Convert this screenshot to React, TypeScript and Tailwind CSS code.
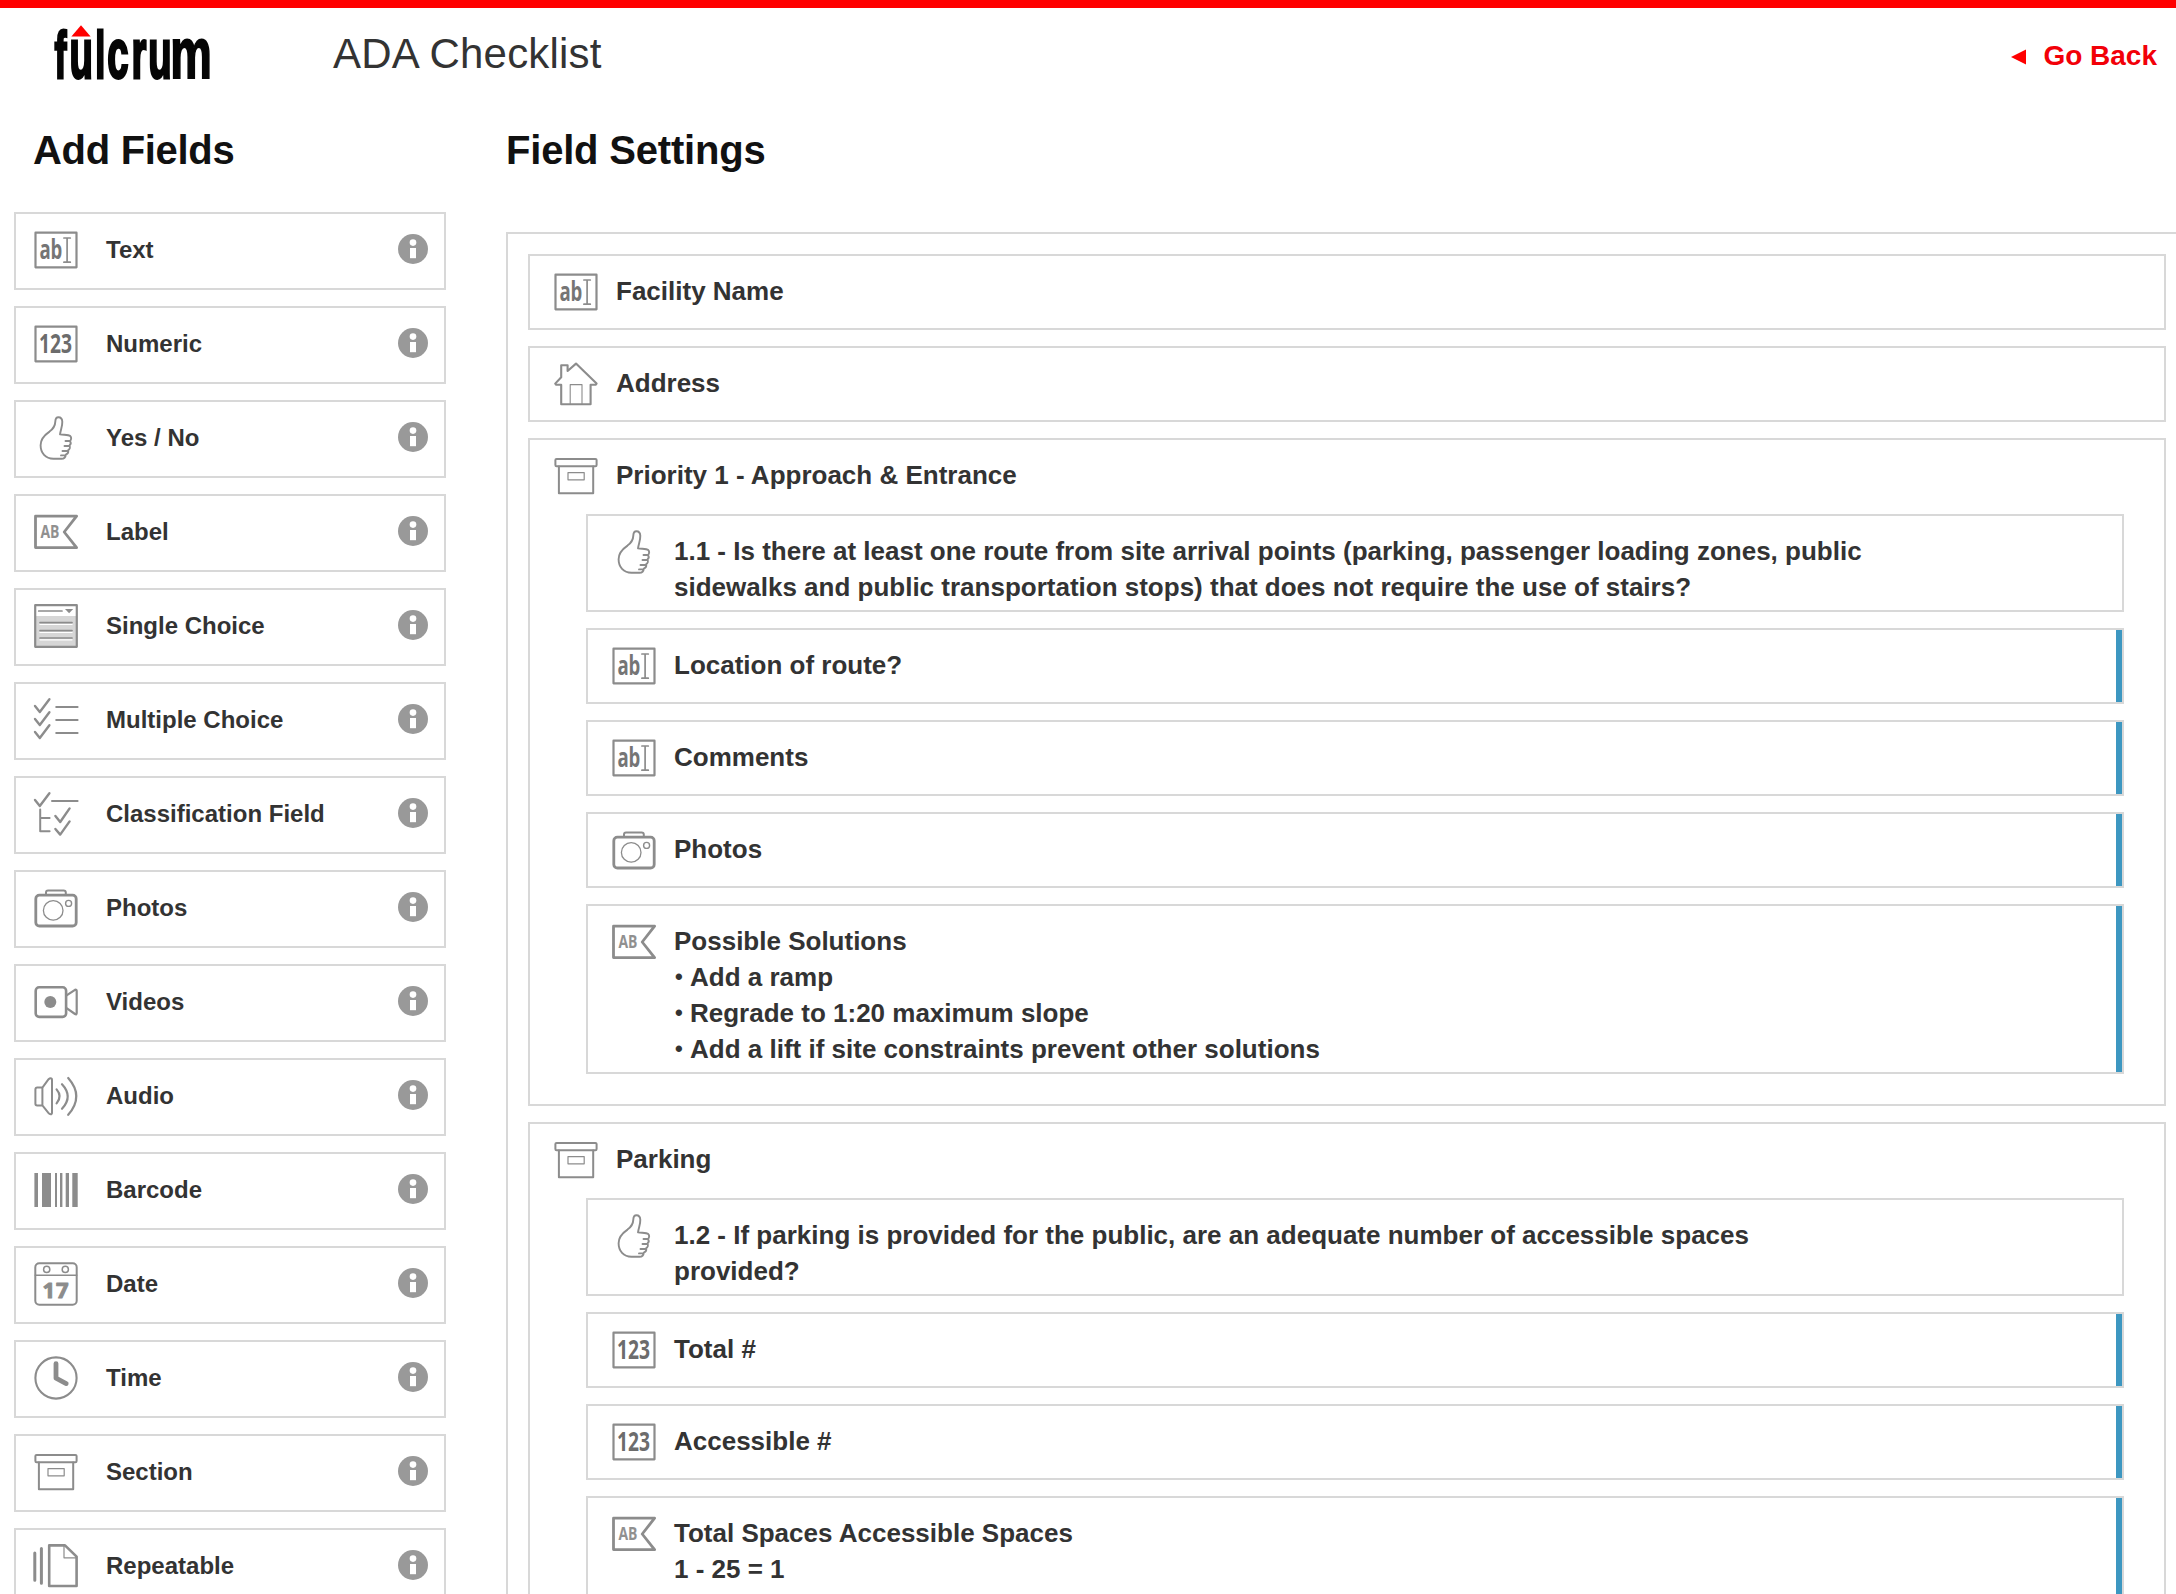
import type { ReactNode } from "react";

type IconName =
  | "text" | "numeric" | "thumb" | "label" | "single" | "multiple" | "classification"
  | "camera" | "video" | "audio" | "barcode" | "date" | "time" | "section" | "repeatable" | "home";

const condensed = { fontFamily: '"Open Sans", sans-serif' };

const drawings: Record<IconName, ReactNode> = {
  text: (
    <>
      <rect x="1.5" y="4.7" width="41" height="34.6" strokeWidth="2.2" />
      <text x="5.4" y="31.3" fontSize="26.5" fontWeight="700" textLength="23" lengthAdjust="spacingAndGlyphs" fill="#757575" stroke="none" style={condensed}>ab</text>
      <path d="M29.9 10H36.3M29.9 34.2H36.3M33.1 10V34.2" strokeWidth="1.7" />
    </>
  ),
  numeric: (
    <>
      <rect x="1.5" y="4.7" width="41" height="34.6" strokeWidth="2.2" />
      <text x="5" y="31.3" fontSize="26.5" fontWeight="700" textLength="33" lengthAdjust="spacingAndGlyphs" fill="#6c6c6c" stroke="none" style={condensed}>123</text>
    </>
  ),
  thumb: (
    <path
      d="M26 18.4C26.6 14 28.5 10.5 28.3 5.8C28.2 2.6 26.6 1.2 24.4 1.2C22 1.2 21.4 3 21.3 5.6C21.2 10 19.5 12.6 15.5 15.6C10 19.4 6.6 23 6.6 29.2C6.6 37 11.5 42.6 19.5 42.8H27.5C30.6 42.8 31.6 40.8 31.8 38.6C33.8 37.8 34.6 36 34 34.4C35.8 33.4 36.4 31.2 35.4 29.4C36.8 28.4 36.9 26.4 36 25C37.4 24 37.6 21.2 36.2 20C34.6 18.6 30 19 26 18.4ZM31.5 25H36M30.5 30H35.4M28.5 35H34M27 39.4H31.6"
      strokeWidth="1.9"
    />
  ),
  label: (
    <>
      <path d="M1.5 6.2H42.6L30.2 22L42.6 37.6H1.5Z" strokeWidth="2.8" />
      <text x="6.4" y="28" fontSize="17" fontWeight="700" textLength="19" lengthAdjust="spacingAndGlyphs" fill="#909090" stroke="none" style={condensed}>AB</text>
    </>
  ),
  single: (
    <>
      <path d="M2 12H42V42H2Z" fill="#d6d6d6" stroke="none" />
      <rect x="1.2" y="1.2" width="41.6" height="41.6" strokeWidth="2.2" />
      <path d="M6 20.4H38M6 28.4H38M6 35.8H38" stroke="#fff" strokeWidth="1.2" />
      <path d="M4.7 7H28M6 18.6H38M6 26.6H38M6 34H38" strokeWidth="1.7" />
      <path d="M31 5H39.2L35.1 9.2Z" fill="#8c8c8c" stroke="none" />
    </>
  ),
  multiple: (
    <>
      <path d="M1 8L5.8 14L15.4 1.2M1 21L5.8 27L15.4 14.2M1 34L5.8 40L15.4 27.2" strokeWidth="2.4" />
      <path d="M22.2 9H43.6M22.2 22H43.6M22.2 35H43.6" strokeWidth="2" />
    </>
  ),
  classification: (
    <>
      <path d="M1 8L5.8 14L15.4 1.2M21.4 24L26.2 30L35.6 16.4M21.4 37L26.2 42.6L35.6 29.4" strokeWidth="2.4" />
      <path d="M18 9H43.6M6.2 17.6V39.3H15.6M6.2 26H15.6" strokeWidth="2" />
    </>
  ),
  camera: (
    <>
      <rect x="1.8" y="9.2" width="40.4" height="30.8" rx="3.6" strokeWidth="2.8" />
      <path d="M12 9V6.6C12 5.2 12.8 4.6 14 4.6H29.6C31 4.6 31.8 5.2 31.8 6.6V9" strokeWidth="2" />
      <circle cx="19.2" cy="24.4" r="9.8" strokeWidth="1.3" />
      <circle cx="34.6" cy="17.4" r="3" strokeWidth="1.4" />
    </>
  ),
  video: (
    <>
      <rect x="1.7" y="7.3" width="30.4" height="29.6" rx="3.4" strokeWidth="2.6" />
      <path d="M32.6 15.4L41 9.8Q42.7 9.2 42.7 11V33Q42.7 35 41 34L32.6 28.2" strokeWidth="2.2" />
      <circle cx="16.3" cy="22" r="6" fill="#8c8c8c" stroke="none" />
    </>
  ),
  audio: (
    <>
      <path d="M8.4 13.6H3.2Q1.4 13.6 1.4 15.4V29.8Q1.4 31.4 3.2 31.4H8.4ZM8.4 13.6L14.6 5.2Q15.6 4.2 16.6 4.2Q18 4.2 18 6V38.4Q18 40.2 16.6 40.2Q15.4 40.2 14.6 39.2L8.4 31.4" strokeWidth="2" />
      <path d="M22.6 15.4Q28.6 22.4 22.6 29.4M28 10.2Q39.4 22.4 28 34.8M34.2 4Q50.4 22.4 34.2 40.8" strokeWidth="2.2" />
    </>
  ),
  barcode: (
    <path d="M.4 5H4V39H.4ZM8 5H17V39H8ZM21 5H23V39H21ZM26 5H28.4V39H26ZM31.7 5H35V39H31.7ZM38.3 5H43.7V39H38.3Z" fill="#8c8c8c" stroke="none" />
  ),
  date: (
    <>
      <rect x="1.3" y="1.3" width="41.4" height="41.4" rx="4" strokeWidth="2" />
      <path d="M1.3 13.2H42.7" strokeWidth="1.6" />
      <circle cx="12.7" cy="7.4" r="3.1" strokeWidth="1.5" />
      <circle cx="31.3" cy="7.4" r="3.1" strokeWidth="1.5" />
      <text x="8.5 22" y="36" fontSize="22" fontWeight="700" fill="#8c8c8c" strokeWidth="1" style={condensed}>17</text>
    </>
  ),
  time: (
    <>
      <circle cx="22" cy="22" r="20.6" strokeWidth="2.1" />
      <path d="M22 7.6V22.2L32.2 27.6" strokeWidth="4.8" />
    </>
  ),
  section: (
    <>
      <rect x="1.4" y="4.9" width="41.2" height="7.4" rx="1.2" strokeWidth="2" />
      <path d="M4.9 12.4V39.3H39.2V12.4" strokeWidth="2" />
      <rect x="14" y="18.6" width="16.2" height="7.2" strokeWidth="1.2" />
    </>
  ),
  repeatable: (
    <>
      <path d="M.8 9V36.2M7.4 4.6V39.2" strokeWidth="3" />
      <path d="M15.2 1.4H31L42.6 12.6V42H15.2Z" strokeWidth="2.6" />
      <path d="M30 2V13.8H42.4" strokeWidth="1.2" />
    </>
  ),
  home: (
    <>
      <path d="M7.2 15.2V3.2H13.6V9L22 1.6L42.6 21.6L41.6 22.8H36.6V42.2H7.2V22.8H2.2L1.2 21.6L7.2 15.2Z" strokeWidth="2.1" />
      <path d="M16.2 41.6V22.6H28V41.6" strokeWidth="1.1" />
    </>
  ),
};

function Icon({ name }: { name: IconName }) {
  return (
    <svg
      viewBox="0 0 44 44"
      className="size-11 shrink-0 overflow-visible"
      fill="none"
      stroke="#8c8c8c"
      strokeLinecap="round"
      strokeLinejoin="round"
    >
      {drawings[name]}
    </svg>
  );
}

function InfoBadge() {
  return (
    <svg viewBox="0 0 30 30" className="mt-1.5 size-[30px] shrink-0">
      <circle cx="15" cy="15" r="15" fill="#999" />
      <circle cx="15" cy="8.6" r="3.3" fill="#fff" />
      <path d="M12 14H18V24.2H12Z" fill="#fff" />
    </svg>
  );
}

const fieldTypes: { icon: IconName; name: string }[] = [
  { icon: "text", name: "Text" },
  { icon: "numeric", name: "Numeric" },
  { icon: "thumb", name: "Yes / No" },
  { icon: "label", name: "Label" },
  { icon: "single", name: "Single Choice" },
  { icon: "multiple", name: "Multiple Choice" },
  { icon: "classification", name: "Classification Field" },
  { icon: "camera", name: "Photos" },
  { icon: "video", name: "Videos" },
  { icon: "audio", name: "Audio" },
  { icon: "barcode", name: "Barcode" },
  { icon: "date", name: "Date" },
  { icon: "time", name: "Time" },
  { icon: "section", name: "Section" },
  { icon: "repeatable", name: "Repeatable" },
];

type Field = { icon: IconName; lines: string[]; conditional?: boolean };

const approach: Field[] = [
  {
    icon: "thumb",
    lines: [
      "1.1 - Is there at least one route from site arrival points (parking, passenger loading zones, public",
      "sidewalks and public transportation stops) that does not require the use of stairs?",
    ],
  },
  { icon: "text", lines: ["Location of route?"], conditional: true },
  { icon: "text", lines: ["Comments"], conditional: true },
  { icon: "camera", lines: ["Photos"], conditional: true },
  {
    icon: "label",
    lines: [
      "Possible Solutions",
      "• Add a ramp",
      "• Regrade to 1:20 maximum slope",
      "• Add a lift if site constraints prevent other solutions",
    ],
    conditional: true,
  },
];

const parking: Field[] = [
  {
    icon: "thumb",
    lines: [
      "1.2 - If parking is provided for the public, are an adequate number of accessible spaces",
      "provided?",
    ],
  },
  { icon: "numeric", lines: ["Total #"], conditional: true },
  { icon: "numeric", lines: ["Accessible #"], conditional: true },
  { icon: "label", lines: ["Total Spaces Accessible Spaces", "1 - 25 = 1"], conditional: true },
];

function FieldHeading({ icon, lines }: Field) {
  return (
    <div className="flex flex-1 items-start gap-[18px] pt-3.5 pl-6">
      <Icon name={icon} />
      <div className="pt-[3px] pb-[5px] text-[26px] leading-9 font-bold whitespace-nowrap">
        {lines.map((line) =>
          line.startsWith("•") ? (
            <div key={line} className="flex">
              <span className="w-4 pl-px text-[22px]">•</span>
              <span>{line.slice(2)}</span>
            </div>
          ) : (
            <div key={line}>{line}</div>
          ),
        )}
      </div>
    </div>
  );
}

function FieldRow(field: Field) {
  return (
    <div className="flex min-h-[76px] border-2 border-[#d8d8d8] last:grow">
      <FieldHeading {...field} />
      {field.conditional && <div className="w-1.5 bg-[#3d97c1]" />}
    </div>
  );
}

function SectionBox({ title, fields, tall }: { title: string; fields: Field[]; tall?: boolean }) {
  return (
    <div className={`flex flex-col border-2 border-[#d8d8d8] pb-[30px] ${tall ? "min-h-[620px]" : ""}`}>
      <div className="flex h-[74px]">
        <FieldHeading icon="section" lines={[title]} />
      </div>
      <div className="flex grow flex-col gap-4 pr-10 pl-14">
        {fields.map((field) => (
          <FieldRow key={field.lines[0]} {...field} />
        ))}
      </div>
    </div>
  );
}

function Logo() {
  return (
    <svg viewBox="0 0 160 60" className="h-[60px] w-40 shrink-0 overflow-visible">
      <g
        fontWeight="700"
        fill="#050505"
        stroke="#050505"
        style={{ fontFamily: '"Liberation Sans", Arial, sans-serif' }}
      >
        <text transform="translate(0 53.5) scale(.54 1)" x=".7 28.8 76.4 98.5 143.3 174.6" y="0" fontSize="71" strokeWidth="3">
          <tspan fontSize="66.8">f</tspan>
          <tspan>u</tspan>
          <tspan fontSize="66.8">l</tspan>
          <tspan>cru</tspan>
        </text>
        <text transform="translate(0 53.8) scale(.65 1)" x="178.7" y="0" fontSize="72" strokeWidth="2">
          m
        </text>
      </g>
      <path d="M17.4 12.6H36.6L27 1.2Z" fill="#f00" />
    </svg>
  );
}

export default function App() {
  return (
    <div className="h-[1594px] w-[2176px] overflow-hidden border-t-8 border-[#f00] bg-white font-['Liberation_Sans',Arial,sans-serif] text-[#333]">
      <header className="flex h-[104px] items-start pt-4 pr-[19px] pl-[54px]">
        <Logo />
        <h1 className="ml-[119px] pt-1.5 text-[42px] leading-[48px] tracking-[0.2px]">ADA Checklist</h1>
        <a className="ml-auto flex items-center gap-[17px] pt-4 text-[28px] leading-8 font-bold text-[#f20008]">
          <svg viewBox="0 0 15 16" className="mt-0.5 h-4 w-[15px]">
            <path d="M0 8L15 .6V15.4Z" fill="#f00" />
          </svg>
          Go Back
        </a>
      </header>

      <div className="flex">
        <aside className="w-[492px] shrink-0 pl-3.5">
          <h2 className="h-[100px] pt-[15px] pl-[19px] text-[40px] leading-[46px] font-bold tracking-[-0.3px] text-[#111]">
            Add Fields
          </h2>
          <div className="flex w-[432px] flex-col gap-4">
            {fieldTypes.map(({ icon, name }) => (
              <div key={name} className="flex h-[78px] items-start border-2 border-[#d8d8d8] pt-3.5 pr-4 pl-[18px]">
                <Icon name={icon} />
                <span className="ml-7 flex-1 pt-1 text-2xl leading-9 font-bold">{name}</span>
                <InfoBadge />
              </div>
            ))}
          </div>
        </aside>

        <main className="w-[1684px] shrink-0 pl-3.5">
          <h2 className="h-[120px] pt-[15px] text-[40px] leading-[46px] font-bold tracking-[-0.2px] text-[#111]">
            Field Settings
          </h2>
          <div className="flex flex-col gap-4 border-t-2 border-l-2 border-[#d8d8d8] pt-5 pr-2.5 pl-5">
            <FieldRow icon="text" lines={["Facility Name"]} />
            <FieldRow icon="home" lines={["Address"]} />
            <SectionBox title="Priority 1 - Approach & Entrance" fields={approach} />
            <SectionBox title="Parking" fields={parking} tall />
          </div>
        </main>
      </div>
    </div>
  );
}
